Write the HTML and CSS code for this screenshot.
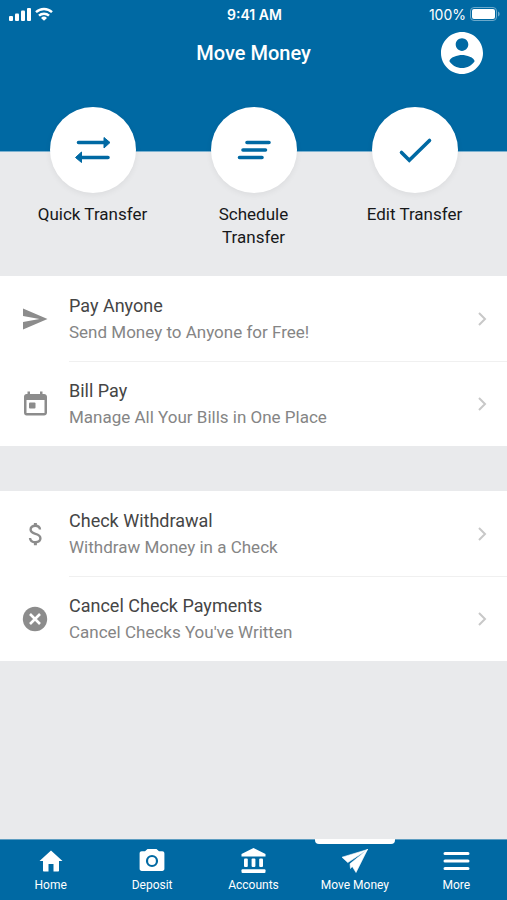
FILE: index.html
```html
<!DOCTYPE html>
<html lang="en">
<head>
<meta charset="utf-8">
<meta name="viewport" content="width=device-width, initial-scale=1">
<title>Move Money</title>
<link rel="stylesheet" href="styles.css">
</head>
<body>
<header class="header">
  <div class="status">
    <div class="status-left">
      <svg width="22" height="14" viewBox="0 0 22 14" fill="currentColor" aria-hidden="true"><rect x="0" y="9" width="4" height="5" rx="1"/><rect x="6" y="6.500" width="4" height="7.500" rx="1"/><rect x="12" y="3.500" width="4" height="10.500" rx="1"/><rect x="18" y="1" width="4" height="13" rx="1"/></svg>
      <svg width="18" height="14" viewBox="0 0 18 14" fill="none" stroke="currentColor" stroke-width="2.400" aria-hidden="true"><path d="M1 5.200a11.500 11.500 0 0 1 16 0M4 8.700a7.200 7.200 0 0 1 10 0"/><path d="M9 13.800 6 11a4.300 4.300 0 0 1 6 0z" fill="currentColor" stroke="none"/></svg>
    </div>
    <span class="clock">9:41 AM</span>
    <div class="status-right">
      <span>100%</span>
      <svg width="30" height="14" viewBox="0 0 30 14" aria-hidden="true"><rect x=".5" y=".5" width="26" height="13" rx="3.500" fill="none" stroke="#6ba9cb"/><rect x="2" y="2" width="23" height="10" rx="2" fill="#fff"/><path d="M28 4.500c2.200.8 2.200 4.200 0 5z" fill="#6ba9cb"/></svg>
    </div>
  </div>
  <div class="title-bar">
    <h1 class="title">Move Money</h1>
    <button class="profile" type="button" aria-label="Profile">
      <svg viewBox="2 2 20 20" fill="currentColor" aria-hidden="true"><path d="M12 2C6.480 2 2 6.480 2 12s4.480 10 10 10 10-4.480 10-10S17.520 2 12 2zm0 3c1.660 0 3 1.340 3 3s-1.340 3-3 3-3-1.340-3-3 1.340-3 3-3zm0 14.200c-2.500 0-4.710-1.280-6-3.220.03-1.990 4-3.080 6-3.080 1.990 0 5.970 1.090 6 3.080-1.290 1.940-3.500 3.220-6 3.220z"/></svg>
    </button>
  </div>
</header>
<main class="main">
  <div class="actions">
    <button class="action" type="button">
      <span class="disc"><svg viewBox="0 0 86 86" aria-hidden="true"><path d="M28.500 35.500H54M32 50.500h26" fill="none" stroke="currentColor" stroke-width="3.600" stroke-linecap="round"/><path d="M54 30.500l6 5-6 5.500zM31.500 45l-6 5.500 6 5z" fill="currentColor" stroke="currentColor" stroke-linejoin="round"/></svg></span>
      <span>Quick Transfer</span>
    </button>
    <button class="action" type="button">
      <span class="disc"><svg viewBox="0 0 86 86" fill="none" stroke="currentColor" stroke-width="3.600" stroke-linecap="round" aria-hidden="true"><path d="M36 35.500h22M32 43h22.500M28.500 50.500h22.500"/></svg></span>
      <span>Schedule Transfer</span>
    </button>
    <button class="action" type="button">
      <span class="disc"><svg viewBox="0 0 86 86" fill="none" stroke="currentColor" stroke-width="3.600" stroke-linecap="round" aria-hidden="true"><path d="M29.500 45.500l7.800 7.800L57.500 33.500"/></svg></span>
      <span>Edit Transfer</span>
    </button>
  </div>
  <section class="card">
    <a class="row" href="#pay">
      <svg class="row-icon" viewBox="0 0 28 28" fill="currentColor" aria-hidden="true"><path d="M2 3.500 26.500 14 2 24.500V17l16.500-3L2 11z"/></svg>
      <span class="row-body"><span class="row-text"><span class="row-title">Pay Anyone</span><span class="row-note">Send Money to Anyone for Free!</span></span>
      <svg class="chevron" viewBox="0 0 10 16" aria-hidden="true"><path d="M2 2l6 6-6 6"/></svg></span>
    </a>
    <a class="row" href="#bills">
      <svg class="row-icon" viewBox="0 0 28 28" fill="currentColor" aria-hidden="true"><path fill-rule="evenodd" d="M6.500 1.500H9V4h10V1.500h2.500V4H23c1.700 0 3 1.200 3 2.800v16c0 1.600-1.300 2.700-3 2.700H5.500C4 25.500 3 24.400 3 22.800v-16C3 5.200 4 4 5.500 4h1zM5.500 10v13h18V10z"/><rect x="8" y="12.500" width="6.500" height="6" rx="1"/></svg>
      <span class="row-body"><span class="row-text"><span class="row-title">Bill Pay</span><span class="row-note">Manage All Your Bills in One Place</span></span>
      <svg class="chevron" viewBox="0 0 10 16" aria-hidden="true"><path d="M2 2l6 6-6 6"/></svg></span>
    </a>
  </section>
  <section class="card">
    <a class="row" href="#withdraw">
      <svg class="row-icon" viewBox="0 0 28 28" fill="none" stroke="currentColor" stroke-width="2.400" aria-hidden="true"><path d="M19 9.500c-.2-2.500-2-3.700-4.700-3.700-2.800 0-4.700 1.400-4.700 3.700 0 2.600 2 3.600 4.800 4.400 3 .8 5 1.900 5 4.400 0 2.400-2 3.900-5 3.900-3.200 0-5.200-1.500-5.400-4.200"/><path d="M14.400 3v3M14.400 22v3.200" stroke-width="3"/></svg>
      <span class="row-body"><span class="row-text"><span class="row-title">Check Withdrawal</span><span class="row-note">Withdraw Money in a Check</span></span>
      <svg class="chevron" viewBox="0 0 10 16" aria-hidden="true"><path d="M2 2l6 6-6 6"/></svg></span>
    </a>
    <a class="row" href="#cancel">
      <svg class="row-icon" viewBox="0 0 28 28" aria-hidden="true"><circle cx="14" cy="14" r="12.200" fill="currentColor"/><path d="M9 9l10 10m0-10l-10 10" stroke="#fff" stroke-width="2.600"/></svg>
      <span class="row-body"><span class="row-text"><span class="row-title">Cancel Check Payments</span><span class="row-note">Cancel Checks You've Written</span></span>
      <svg class="chevron" viewBox="0 0 10 16" aria-hidden="true"><path d="M2 2l6 6-6 6"/></svg></span>
    </a>
  </section>
</main>
<nav class="tabs" aria-label="Main">
  <a class="tab" href="#home"><svg viewBox="0 0 28 28" fill="currentColor" aria-hidden="true"><path d="M14 3.500 2.500 14H6v9.700c0 .5.300.8.800.8h4.700v-7.500h5v7.500h4.700c.5 0 .8-.3.800-.8V14h3.500z"/></svg><span>Home</span></a>
  <a class="tab" href="#deposit"><svg viewBox="0 0 28 28" aria-hidden="true"><path fill="currentColor" d="M9.500 2h9L21 4.200h3.200c1.300 0 2.200.9 2.200 2.200v15.400c0 1.300-.9 2.200-2.200 2.200H3.800c-1.300 0-2.200-.9-2.200-2.200V6.400c0-1.300.9-2.200 2.200-2.200H7z"/><circle cx="14" cy="14" r="5" fill="none" stroke="#0069a3" stroke-width="2.200"/></svg><span>Deposit</span></a>
  <a class="tab" href="#accounts"><svg viewBox="0 0 28 28" fill="currentColor" aria-hidden="true"><path d="M14.500 1 2.500 7v2.500h24V7z"/><rect x="5" y="11.500" width="3.800" height="8.500" rx="1"/><rect x="12.600" y="11.500" width="3.800" height="8.500" rx="1"/><rect x="20.200" y="11.500" width="3.800" height="8.500" rx="1"/><rect x="2.500" y="22.300" width="24" height="3.700" rx="1"/></svg><span>Accounts</span></a>
  <a class="tab active" href="#move" aria-current="page"><svg viewBox="0 0 28 28" fill="currentColor" aria-hidden="true"><path d="M26.500 2.500 1 10.200l5.800 5.400zM26.500 2.500 9 16.800l.5 4.700zM26.500 2.500 10.700 18.500l4.300 7z" stroke="currentColor" stroke-width=".6" stroke-linejoin="round"/></svg><span>Move Money</span></a>
  <a class="tab" href="#more"><svg viewBox="0 0 28 28" fill="none" stroke="currentColor" stroke-width="3" stroke-linecap="round" aria-hidden="true"><path d="M3 6.500h23M3 14h23M3 21.500h23"/></svg><span>More</span></a>
</nav>
</body>
</html>
```
FILE: styles.css
```css
:root {
  --blue: #0069a3;
  --page: #e9eaec;
}

* {
  box-sizing: border-box;
}

body {
  margin: 0;
  min-height: 100vh;
  display: flex;
  flex-direction: column;
  background: var(--page);
  font-family: Roboto, "Liberation Sans", sans-serif;
}

svg {
  display: block;
}

a {
  color: inherit;
  text-decoration: none;
}

button {
  border: 0;
  padding: 0;
  background: none;
  color: inherit;
  font: inherit;
}

.header {
  background: var(--blue);
  color: #fff;
  padding-bottom: 73px;
  border-bottom: 1px solid #7db2d0;
}

.status {
  display: grid;
  grid-template-columns: 1fr auto 1fr;
  align-items: center;
  height: 28px;
  padding: 0 7px 0 9px;
  font-family: Inter, sans-serif;
  font-size: 14px;
}

.status-left,
.status-right {
  display: flex;
  align-items: center;
  gap: 4px;
}

.status-right {
  justify-content: flex-end;
}

.clock {
  font-weight: 600;
}

.title-bar {
  display: grid;
  grid-template-columns: 1fr auto 1fr;
  align-items: center;
  height: 50px;
  padding: 0 24px;
}

.title {
  grid-column: 2;
  margin: 0;
  font-size: 20px;
  font-weight: 500;
}

.profile {
  width: 42px;
  height: 42px;
  justify-self: end;
}

.main {
  flex: 1;
}

.actions {
  display: grid;
  grid-template-columns: repeat(3, 1fr);
  align-items: start;
  margin-top: -45px;
  padding: 0 12px 27px;
}

.action {
  display: flex;
  flex-direction: column;
  align-items: center;
  gap: 10px;
  padding: 0 20px;
  color: #17181a;
  font-size: 17px;
  line-height: 23px;
}

.disc {
  width: 86px;
  height: 86px;
  border-radius: 50%;
  background: #fff;
  color: var(--blue);
  box-shadow: 0 2px 6px rgb(0 0 0 / 6%);
}

.card {
  background: #fff;
}

.card + .card {
  margin-top: 45px;
}

.row {
  display: flex;
  align-items: center;
  gap: 20px;
  padding-left: 21px;
}

.row-icon {
  width: 28px;
  height: 28px;
  color: #8c8c8c;
}

.row-body {
  flex: 1;
  display: flex;
  align-items: center;
  justify-content: space-between;
  padding: 17px 20px 16px 0;
}

.row + .row .row-body {
  padding-top: 16px;
  border-top: 1px solid #f0f0f0;
}

.row-text {
  display: flex;
  flex-direction: column;
  line-height: 26px;
}

.row-title {
  color: #454545;
  font-size: 18px;
}

.row-note {
  color: #858585;
  font-size: 17px;
}

.chevron {
  width: 10px;
  height: 16px;
  fill: none;
  stroke: #c8c8c8;
  stroke-width: 2;
}

.tabs {
  display: grid;
  grid-template-columns: repeat(5, 1fr);
  background: var(--blue);
  color: #fff;
  border-top: 1px solid #5d9dc1;
}

.tab {
  position: relative;
  display: flex;
  flex-direction: column;
  align-items: center;
  gap: 2px;
  padding: 7px 0;
  font-size: 12px;
  line-height: 16px;
}

.tab svg {
  width: 28px;
  height: 28px;
}

.active::before {
  content: "";
  position: absolute;
  top: -1px;
  left: 11px;
  right: 11px;
  height: 5px;
  border-radius: 0 0 4px 4px;
  background: #fff;
}
```
